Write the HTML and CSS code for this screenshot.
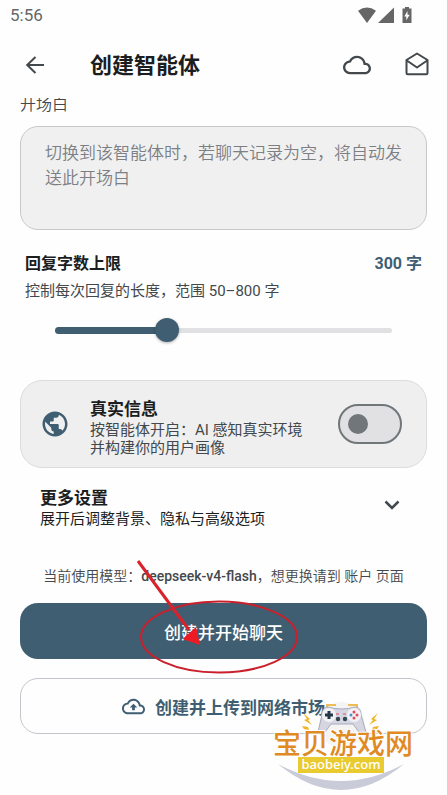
FILE: index.html
```html
<!DOCTYPE html>
<html lang="zh-CN">
<head>
<meta charset="utf-8">
<meta name="viewport" content="width=device-width, initial-scale=1">
<title>创建智能体</title>
<link rel="stylesheet" href="styles.css">
</head>
<body>
<div class="status-bar">
  <span>5:56</span>
  <svg width="56" height="18" viewBox="0 0 56 18" fill="#666" aria-hidden="true">
    <path d="M10 17 1 4.800Q10-1.800 19 4.800Z"/>
    <path d="M21 17 37 1.500V17Z"/>
    <path d="M45.500 2.500H48V1h4v1.500h2.500V17h-9Z"/>
    <path fill="#fff" d="M50.500 5 47.300 10.600h2V14.200L52.700 8.700h-2.200Z"/>
  </svg>
</div>

<header class="app-bar">
  <button class="icon-button" type="button" aria-label="返回">
    <svg width="26" height="26" viewBox="0 0 26 26" fill="none" stroke="#43484c" stroke-width="2" aria-hidden="true">
      <path d="M22 13H5M13.500 5 5.200 13l8.300 8"/>
    </svg>
  </button>
  <h1 class="app-title">创建智能体</h1>
  <button class="icon-button" type="button" aria-label="云端">
    <svg width="28" height="28" viewBox="0 0 24 24" fill="#43484c" aria-hidden="true">
      <path d="M19.350 10.040C18.670 6.590 15.640 4 12 4 9.110 4 6.600 5.640 5.350 8.040 2.340 8.360 0 10.910 0 14c0 3.310 2.690 6 6 6h13c2.760 0 5-2.240 5-5 0-2.640-2.050-4.780-4.650-4.960zM19 18H6c-2.210 0-4-1.790-4-4 0-2.050 1.530-3.760 3.560-3.970l1.070-.110.500-.950C8.080 7.140 9.940 6 12 6c2.620 0 4.880 1.860 5.390 4.430l.300 1.500 1.530.110c1.560.100 2.780 1.410 2.780 2.960 0 1.650-1.350 3-3 3z"/>
    </svg>
  </button>
  <button class="icon-button" type="button" aria-label="消息">
    <svg width="28" height="28" viewBox="0 0 28 28" fill="none" stroke="#43484c" stroke-width="2" stroke-linejoin="round" aria-hidden="true">
      <path d="M14 2.500 24.500 9V22a1.200 1.200 0 0 1-1.200 1.200H4.700a1.200 1.200 0 0 1-1.200-1.200V9ZM3.800 9.500 14 16.500 24.200 9.500"/>
    </svg>
  </button>
</header>

<main class="content">
  <label class="field-label" for="greeting">开场白</label>
  <textarea class="greeting" id="greeting" placeholder="切换到该智能体时，若聊天记录为空，将自动发送此开场白"></textarea>

  <section class="limit">
    <div class="limit-head">
      <label class="limit-title" for="limit">回复字数上限</label>
      <output class="limit-value" for="limit">300 字</output>
    </div>
    <p class="note">控制每次回复的长度，范围 50–800 字</p>
    <div class="slider">
      <input id="limit" type="range" min="50" max="800" value="300">
    </div>
  </section>

  <section class="card">
    <svg class="globe" width="30" height="30" viewBox="0 0 24 24" fill="#405e71" aria-hidden="true">
      <path d="M12 2C6.480 2 2 6.480 2 12s4.480 10 10 10 10-4.480 10-10S17.520 2 12 2zm-1 17.930c-3.950-.490-7-3.850-7-7.930 0-.620.080-1.210.210-1.790L9 15v1c0 1.100.900 2 2 2v1.930zm6.900-2.540c-.260-.810-1-1.390-1.900-1.390h-1v-3c0-.550-.450-1-1-1H8v-2h2c.550 0 1-.450 1-1V7h2c1.100 0 2-.900 2-2v-.410c2.930 1.190 5 4.060 5 7.410 0 2.080-.800 3.970-2.100 5.390z"/>
    </svg>
    <div class="card-text">
      <label class="item-title" for="real-info">真实信息</label>
      <p class="item-note muted">按智能体开启：AI 感知真实环境并构建你的用户画像</p>
    </div>
    <input class="switch" id="real-info" type="checkbox" role="switch">
  </section>

  <button class="more" type="button" aria-expanded="false">
    <span class="more-text">
      <span class="item-title">更多设置</span>
      <span class="item-note">展开后调整背景、隐私与高级选项</span>
    </span>
    <svg width="20" height="20" viewBox="0 0 20 20" fill="none" stroke="#43484c" stroke-width="2.500" aria-hidden="true">
      <path d="m3.500 4.500 6.500 6.500 6.500-6.500"/>
    </svg>
  </button>

  <p class="model">当前使用模型：<b>deepseek-v4-flash</b>，想更换请到 账户 页面</p>

  <div class="primary-wrap">
    <button class="action primary" type="button">创建并开始聊天</button>
    <svg class="pointer" width="168" height="120" viewBox="0 0 168 120" fill="none" aria-hidden="true">
      <ellipse cx="84" cy="80" rx="78" ry="35.500" stroke="#c9202c" stroke-width="2"/>
      <path d="M3 4 54 73" stroke="#d9222b" stroke-width="3"/>
      <path d="M65 88 47.500 82 61 70Z" fill="#ed1c24"/>
    </svg>
  </div>

  <div class="upload-wrap">
    <button class="action outlined" type="button">
      <svg width="23" height="23" viewBox="0 0 24 24" fill="#405e71" aria-hidden="true">
        <path d="M19.350 10.040C18.670 6.590 15.640 4 12 4 9.110 4 6.600 5.640 5.350 8.040 2.340 8.360 0 10.910 0 14c0 3.310 2.690 6 6 6h13c2.760 0 5-2.240 5-5 0-2.640-2.050-4.780-4.650-4.960zM19 18H6c-2.210 0-4-1.790-4-4 0-2.050 1.530-3.760 3.560-3.970l1.070-.110.500-.950C8.080 7.140 9.940 6 12 6c2.620 0 4.880 1.860 5.390 4.430l.300 1.500 1.530.110c1.560.100 2.780 1.410 2.780 2.960 0 1.650-1.350 3-3 3zM8 13h2.550v3h2.900v-3H16l-4-4z"/>
      </svg>
      创建并上传到网络市场
    </button>
    <svg class="watermark" width="148" height="98" viewBox="0 0 148 98" role="img" aria-label="宝贝游戏网 baobeiy.com">
      <circle cx="72" cy="30" r="23" fill="#f4f4f4"/>
      <path d="M8 69Q71 121 134 69 71 103 8 69Z" fill="#c9cbd8"/>
      <path d="M57 13v-3h9M87 13v-3h-9" fill="none" stroke="#eebd58" stroke-width="2"/>
      <path d="M58 12Q52 12 52 20L48 37q3 5 7 0l6-8h22l6 8q4 5 7 0L91 20Q91 12 85 12Q72 16 58 12Z" fill="#d5d6e1" stroke="#a9abb9"/>
      <circle cx="59" cy="20" r="7" fill="#f1f1f6"/><circle cx="84" cy="20" r="7" fill="#f1f1f6"/>
      <path d="M59 16v8M55 20h8" stroke="#253845" stroke-width="3"/>
      <circle cx="84" cy="17" r="1.500" fill="#e34b5b"/><circle cx="84" cy="23" r="1.500" fill="#e34b5b"/>
      <circle cx="81" cy="20" r="1.500" fill="#4994bd"/><circle cx="87" cy="20" r="1.500" fill="#e34b5b"/>
      <circle cx="68" cy="24" r="2.200" fill="#354953"/><circle cx="75" cy="24" r="2.200" fill="#354953"/>
      <path d="M66 19h3M73 19h3" stroke="#dd4a5a"/>
      <path d="m33 18 7 6-2 1 4 5-8-5 3-1ZM108 18l-7 6 2 1-4 5 8-5-3-1ZM32 31l6 1 1 3-5-1ZM109 31l-6 1-1 3 5-1Z" fill="#f0b323"/>
      <text class="wm-name" x="3" y="59">宝贝游戏网</text>
      <rect x="28" y="62" width="86" height="16" fill="#e9ca2f"/>
      <text class="wm-url" x="71" y="74" text-anchor="middle">baobeiy.com</text>
    </svg>
  </div>
</main>
</body>
</html>
```
FILE: styles.css
```css
* {
  box-sizing: border-box;
}

body {
  margin: 0;
  background: #fefefe;
  color: #1b1d1f;
  font-family: Roboto, "Noto Sans CJK SC", sans-serif;
  font-size: 15px;
}

h1,
p {
  margin: 0;
}

button {
  padding: 0;
  border: 0;
  background: none;
  color: inherit;
  font: inherit;
}

svg {
  display: block;
  flex: none;
}

.status-bar {
  display: flex;
  align-items: center;
  justify-content: space-between;
  height: 30px;
  padding: 0 34px 0 10px;
  color: #666;
  font-size: 17px;
}

.app-bar {
  display: flex;
  align-items: center;
  height: 68px;
  padding: 2px 14px 0 19px;
  gap: 28px;
}

.icon-button {
  display: grid;
  place-items: center;
  width: 32px;
  height: 40px;
}

.app-title {
  flex: 1;
  padding: 2px 0 0 11px;
  font-size: 22px;
  font-weight: 700;
  line-height: 32px;
}

.content {
  display: flex;
  flex-direction: column;
  padding: 0 20px 56px;
  overflow: hidden;
}

.field-label {
  margin-top: -3px;
  color: #43484c;
  font-size: 16px;
  font-weight: 350;
  line-height: 20px;
}

.greeting {
  display: block;
  width: 100%;
  height: 104px;
  margin-top: 11px;
  padding: 14px 20px 14px 24px;
  border: 1px solid #c6c9cc;
  border-radius: 18px;
  background: #f0f0f0;
  color: #1b1d1f;
  font: inherit;
  font-size: 17px;
  font-weight: 350;
  line-height: 25px;
  resize: none;
}

.greeting::placeholder {
  color: #7c8084;
}

.limit {
  padding: 22px 5px 0;
}

.limit-head {
  display: flex;
  justify-content: space-between;
  font-size: 16px;
  font-weight: 700;
  line-height: 24px;
}

.limit-value {
  color: #405e71;
}

.note {
  margin-top: 4px;
  color: #43484c;
  line-height: 22px;
}

.slider {
  position: relative;
  margin: 16px 18px 0;
  height: 24px;
}

.slider::before,
.slider::after {
  content: "";
  position: absolute;
  left: 12px;
  border-radius: 4px;
}

.slider::before {
  top: 10px;
  right: 12px;
  height: 5px;
  background: #e1e1e4;
}

.slider::after {
  top: 9px;
  width: 31%;
  height: 7px;
  background: #405e71;
}

.slider input {
  position: relative;
  z-index: 1;
  display: block;
  width: 100%;
  height: 24px;
  margin: 0;
  background: none;
  appearance: none;
}

.slider input::-webkit-slider-thumb {
  width: 24px;
  height: 24px;
  border-radius: 50%;
  background: #405e71;
  box-shadow: 0 1px 3px rgba(0, 0, 0, 0.3);
  appearance: none;
}

.card {
  display: flex;
  align-items: center;
  margin-top: 38px;
  padding: 10px 24px 10px 19px;
  border: 1px solid #dbdcdd;
  border-radius: 22px;
  background: #efefef;
}

.card-text {
  flex: 1;
  padding: 6px 24px 0 20px;
}

.item-title {
  display: block;
  font-size: 17px;
  font-weight: 700;
  line-height: 24px;
}

.item-note {
  display: block;
  line-height: 18px;
}

.muted {
  color: #43484c;
}

.switch {
  display: flex;
  align-items: center;
  flex: none;
  width: 64px;
  height: 40px;
  margin: 0;
  padding-left: 8px;
  border: 2px solid #70767a;
  border-radius: 20px;
  background: #e1e1e4;
  appearance: none;
}

.switch::before {
  content: "";
  width: 20px;
  height: 20px;
  border-radius: 50%;
  background: #70767a;
}

.more {
  display: flex;
  align-items: center;
  justify-content: space-between;
  margin-top: 18px;
  padding: 0 25px 0 20px;
  text-align: left;
}

.model {
  margin-top: 37px;
  color: #43484c;
  font-size: 14px;
  font-weight: 350;
  line-height: 22px;
  text-align: center;
}

.model b {
  font-weight: 500;
}

.primary-wrap {
  position: relative;
  margin-top: 16px;
}

.action {
  display: flex;
  align-items: center;
  justify-content: center;
  width: 100%;
  height: 56px;
  border-radius: 18px;
  font-size: 17px;
  font-weight: 500;
}

.primary {
  background: #405e71;
  color: #fff;
}

.outlined {
  gap: 10px;
  border: 1px solid #c2c6cb;
  color: #405e71;
  font-weight: 700;
}

.pointer {
  position: absolute;
  left: calc(50% - 89px);
  bottom: -18px;
  pointer-events: none;
}

.upload-wrap {
  position: relative;
  margin-top: 19px;
}

.watermark {
  position: absolute;
  top: 17px;
  right: 9px;
  pointer-events: none;
}

.wm-name {
  fill: #e08a24;
  stroke: #fff;
  stroke-width: 2px;
  paint-order: stroke;
  font-family: "Noto Sans CJK SC", sans-serif;
  font-size: 28px;
  font-weight: 500;
}

.wm-url {
  fill: #fff;
  font-family: "Noto Sans", sans-serif;
  font-size: 13px;
  font-weight: 500;
}
```
